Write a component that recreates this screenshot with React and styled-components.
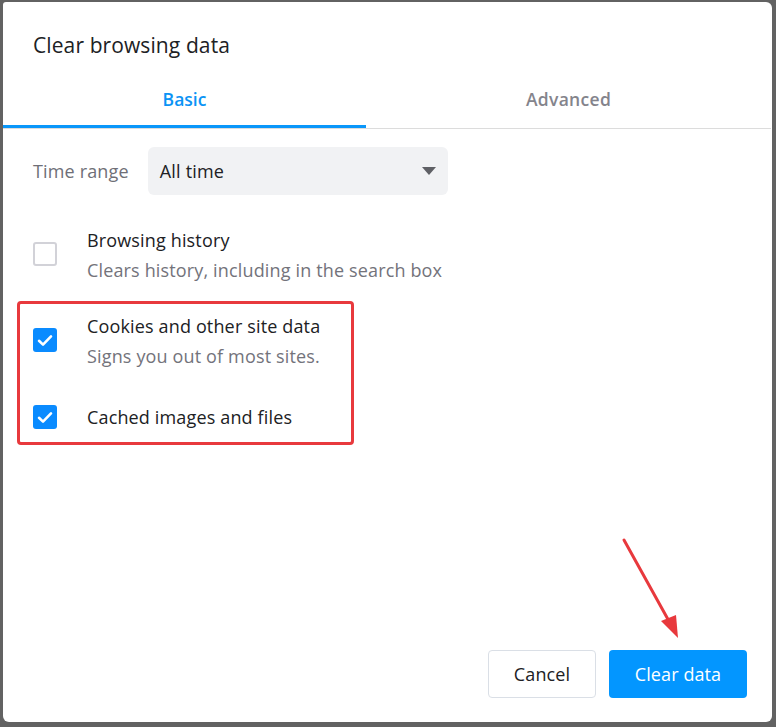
import React from "react";
import styled, { createGlobalStyle } from "styled-components";

const Global = createGlobalStyle`
  html, body { margin: 0; padding: 0; }
  body {
    background: #626262;
    font-family: "Open Sans", "Noto Sans", sans-serif;
  }
  * { box-sizing: border-box; }
`;

const Page = styled.div`
  width: 776px;
  height: 727px;
  padding: 2px 4px 5px 3px;
  background: #626262;
`;

const Dialog = styled.div`
  position: relative;
  height: 100%;
  background: #fff;
  border-radius: 3px 6px 6px 6px;
  display: flex;
  flex-direction: column;
`;

const Title = styled.h1`
  margin: 0;
  padding: 28px 30px 0 30px;
  height: 70px;
  font-size: 21px;
  letter-spacing: 0.1px;
  font-weight: 400;
  line-height: 30px;
  color: #202124;
`;

const Tabs = styled.div`
  display: grid;
  grid-template-columns: 363px 1fr;
  border-bottom: 1px solid #dcdcdc;
  height: 57px;
  margin-right: 1px;
`;

const Tab = styled.div`
  display: flex;
  align-items: center;
  justify-content: center;
  padding-bottom: 2px;
  font-size: 17.5px;
  font-weight: 600;
  letter-spacing: ${(p) => (p.$active ? "0" : "0.3px")};
  color: ${(p) => (p.$active ? "#0a93f5" : "#84848c")};
  box-shadow: ${(p) => (p.$active ? "inset 0 -3px 0 #0a97fa" : "none")};
`;

const Body = styled.div`
  display: flex;
  flex-direction: column;
  padding: 18px 0 0 30px;
`;

const RangeRow = styled.div`
  display: flex;
  align-items: center;
  gap: 19px;
`;

const RangeLabel = styled.span`
  font-size: 18px;
  letter-spacing: 0.15px;
  color: #6f6f77;
`;

const Select = styled.div`
  width: 300px;
  height: 48px;
  border-radius: 6px;
  background: #f1f2f4;
  display: flex;
  align-items: center;
  justify-content: space-between;
  padding: 0 12px 0 12px;
  font-size: 18px;
  letter-spacing: 0.2px;
  color: #202124;
`;

const Caret = styled.span`
  width: 0;
  height: 0;
  border-left: 7px solid transparent;
  border-right: 7px solid transparent;
  border-top: 8px solid #5f6065;
`;

const Item = styled.div`
  display: flex;
  align-items: ${(p) => (p.$single ? "center" : "flex-start")};
  gap: 30px;
  margin-top: ${(p) => p.$mt || 0}px;
`;

const Box = styled.span`
  flex: none;
  width: 24px;
  height: 24px;
  border-radius: 3px;
  margin-top: ${(p) => p.$mt || 0}px;
  display: flex;
  align-items: center;
  justify-content: center;
  background: ${(p) => (p.$checked ? "#0a8bff" : "#fff")};
  border: ${(p) => (p.$checked ? "none" : "2px solid #d2d2d8")};
`;

const Texts = styled.div`
  display: flex;
  flex-direction: column;
`;

const Label = styled.span`
  font-size: 18px;
  letter-spacing: 0.15px;
  line-height: 30px;
  color: #202124;
`;

const Desc = styled.span`
  font-size: 18px;
  letter-spacing: 0.15px;
  line-height: 30px;
  color: #73737b;
`;

const Highlight = styled.div`
  margin: 16px 0 0 -16px;
  width: 337px;
  border: 3px solid #e8393d;
  border-radius: 4px;
  padding: 7px 0 10px 13px;
`;

const Footer = styled.div`
  margin-top: auto;
  display: flex;
  justify-content: flex-end;
  gap: 13px;
  padding: 0 25px 24px 0;
`;

const Button = styled.button`
  height: 48px;
  border-radius: 4px;
  font-family: inherit;
  font-size: 18px;
  letter-spacing: 0.1px;
  padding: 0;
  width: ${(p) => p.$w}px;
  color: ${(p) => (p.$primary ? "#fff" : "#202124")};
  background: ${(p) => (p.$primary ? "#0396ff" : "#fff")};
  border: ${(p) => (p.$primary ? "none" : "1px solid #dadfe6")};
`;

const Arrow = styled.svg`
  position: absolute;
  left: 615px;
  top: 533px;
  pointer-events: none;
`;

const Check = () => (
  <svg width="16" height="13" viewBox="0 0 16 13">
    <path d="M2 6.8 L6 10.6 L14 2.4" fill="none" stroke="#fff" strokeWidth="2.6" strokeLinecap="round" strokeLinejoin="round" />
  </svg>
);

export default function App() {
  return (
    <Page>
      <Global />
      <Dialog>
        <Title>Clear browsing data</Title>
        <Tabs>
          <Tab $active>Basic</Tab>
          <Tab>Advanced</Tab>
        </Tabs>
        <Body>
          <RangeRow>
            <RangeLabel>Time range</RangeLabel>
            <Select>
              <span>All time</span>
              <Caret />
            </Select>
          </RangeRow>
          <Item $mt={30}>
            <Box $mt={17} />
            <Texts>
              <Label>Browsing history</Label>
              <Desc>Clears history, including in the search box</Desc>
            </Texts>
          </Item>
          <Highlight>
            <Item>
              <Box $checked $mt={17}><Check /></Box>
              <Texts>
                <Label>Cookies and other site data</Label>
                <Desc>Signs you out of most sites.</Desc>
              </Texts>
            </Item>
            <Item $single $mt={31}>
              <Box $checked><Check /></Box>
              <Texts>
                <Label>Cached images and files</Label>
              </Texts>
            </Item>
          </Highlight>
        </Body>
        <Footer>
          <Button $w={108}>Cancel</Button>
          <Button $primary $w={138}>Clear data</Button>
        </Footer>
        <Arrow width="70" height="110" viewBox="0 0 70 110">
          <line x1="6" y1="5" x2="52" y2="88" stroke="#e8393d" strokeWidth="3" strokeLinecap="round" />
          <polygon points="60,103 43,86 58,80" fill="#e8393d" />
        </Arrow>
      </Dialog>
    </Page>
  );
}
